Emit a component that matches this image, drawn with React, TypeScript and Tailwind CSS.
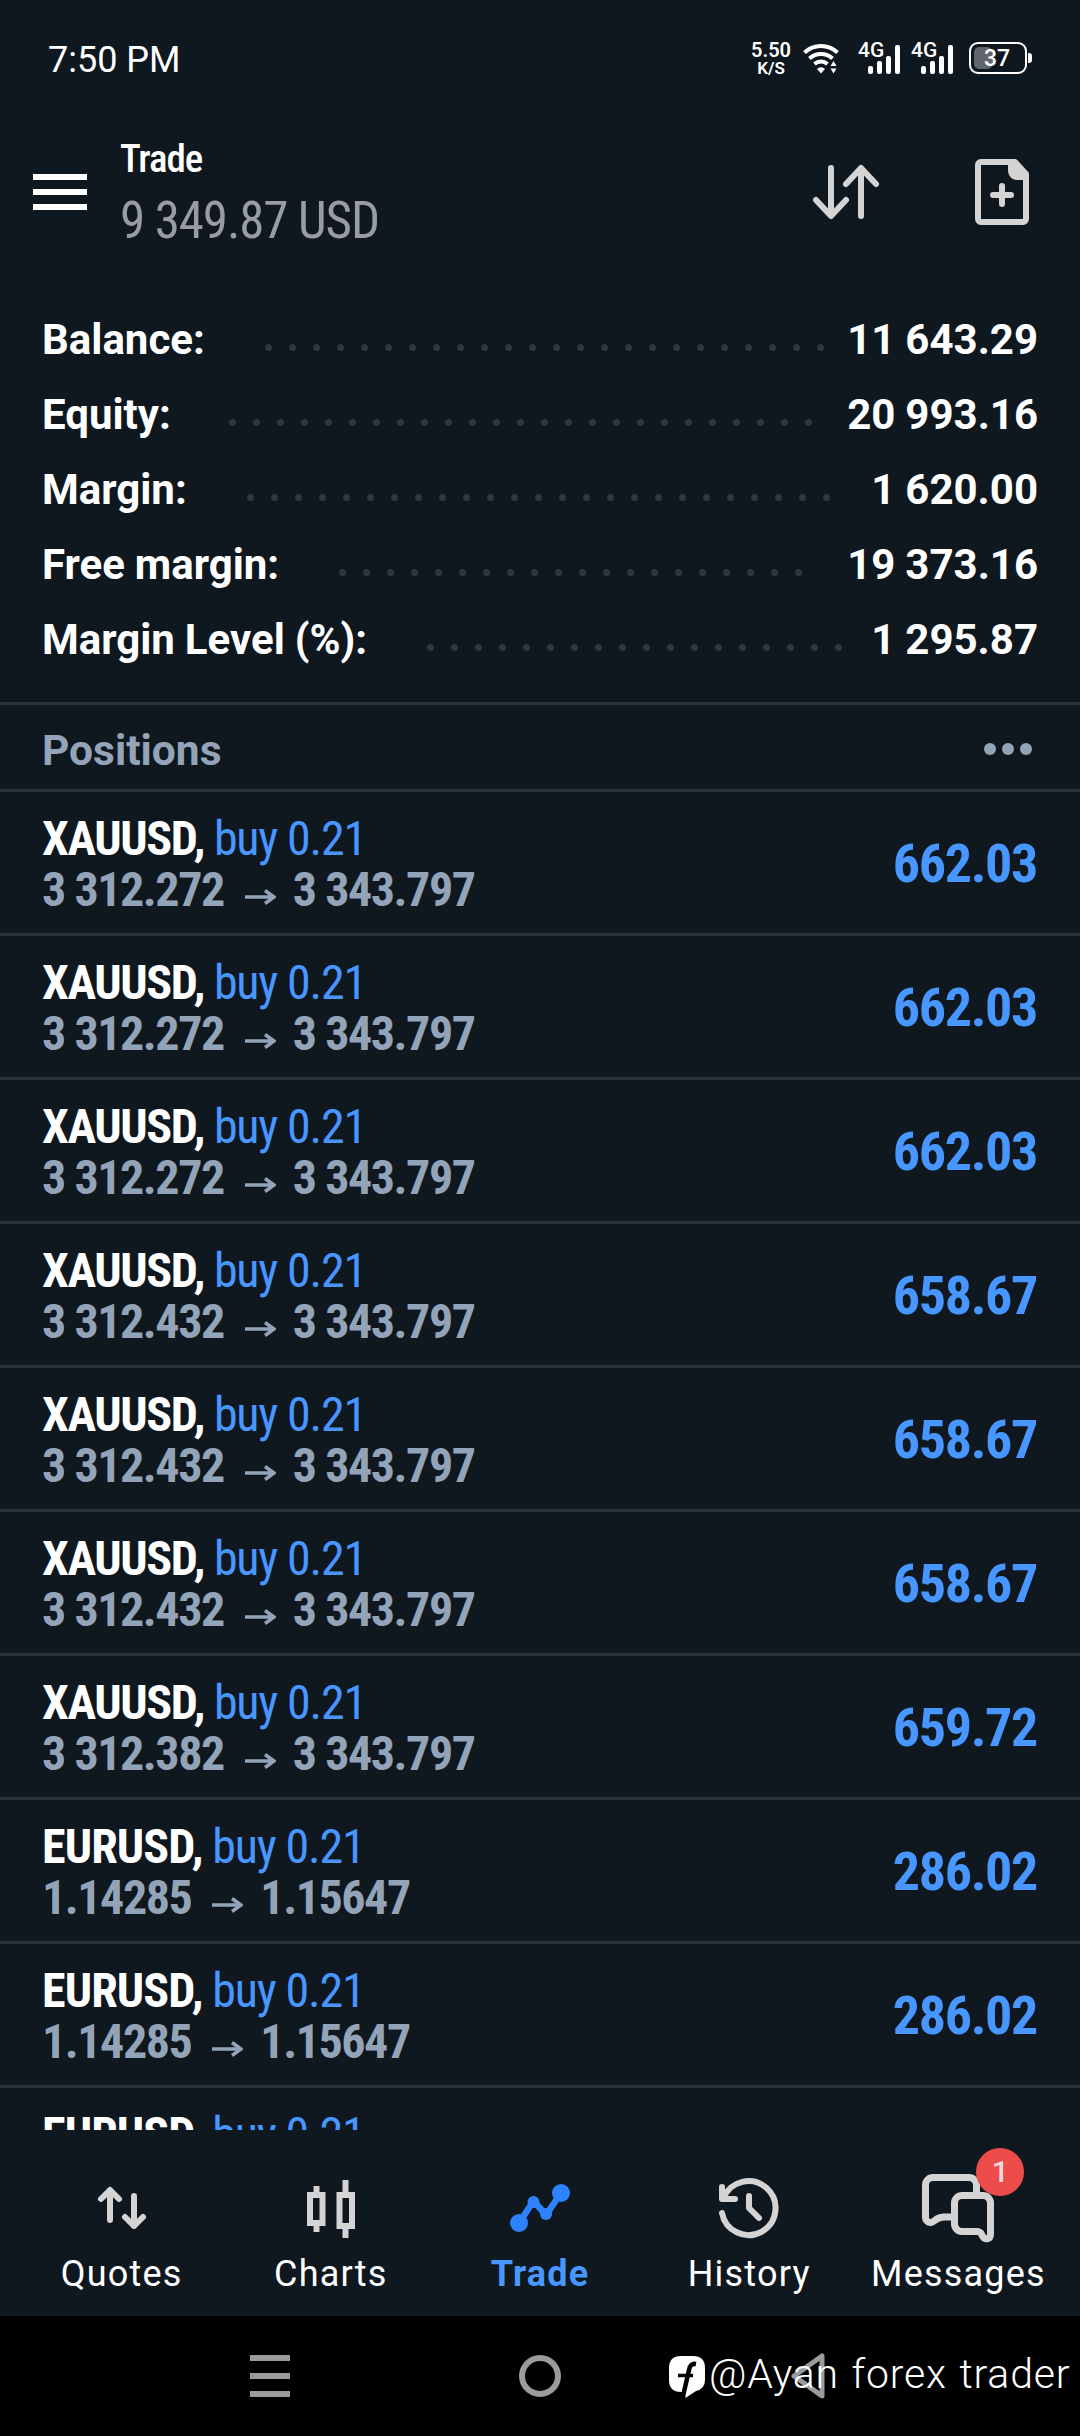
import React from 'react';

interface AccountLine {
  label: string;
  value: string;
  dots: number;
  labelWidth: string;
}

interface Position {
  symbol: string;
  symbolClass: string;
  volume: string;
  open: string;
  current: string;
  profit: string;
}

const accountLines: AccountLine[] = [
  { label: 'Balance:', value: '11 643.29', dots: 24, labelWidth: 'w-[223px]' },
  { label: 'Equity:', value: '20 993.16', dots: 25, labelWidth: 'w-[187px]' },
  { label: 'Margin:', value: '1 620.00', dots: 25, labelWidth: 'w-[205px]' },
  { label: 'Free margin:', value: '19 373.16', dots: 20, labelWidth: 'w-[297px]' },
  { label: 'Margin Level (%):', value: '1 295.87', dots: 18, labelWidth: 'w-[385px]' },
];

const gold = (open: string, profit: string): Position => ({
  symbol: 'XAUUSD',
  symbolClass: 'tracking-[-1.4px]',
  volume: 'buy 0.21',
  open,
  current: '3 343.797',
  profit,
});

const euro: Position = {
  symbol: 'EURUSD',
  symbolClass: 'tracking-[-0.9px]',
  volume: 'buy 0.21',
  open: '1.14285',
  current: '1.15647',
  profit: '286.02',
};

const positions: Position[] = [
  gold('3 312.272', '662.03'),
  gold('3 312.272', '662.03'),
  gold('3 312.272', '662.03'),
  gold('3 312.432', '658.67'),
  gold('3 312.432', '658.67'),
  gold('3 312.432', '658.67'),
  gold('3 312.382', '659.72'),
  euro,
  euro,
  euro,
];

const condensed = "font-['Roboto_Condensed','Roboto',sans-serif] [font-stretch:75%]";

const SignalIcon = () => (
  <div className="relative w-[43px] h-[32px]">
    <span className="absolute left-0 top-0 text-[21px] leading-[17px] font-medium">4G</span>
    <svg className="absolute left-[10px] top-[3px]" width="33" height="29" fill="white">
      <rect x="0" y="21" width="5" height="8" rx="2" />
      <rect x="9" y="16" width="5" height="13" rx="2" />
      <rect x="18" y="11" width="5" height="18" rx="2" />
      <rect x="27" y="0" width="5" height="29" rx="2" />
    </svg>
  </div>
);

const StatusBar = () => (
  <div className="h-24 pt-5 pl-12 pr-12 flex items-center justify-between text-white">
    <span className="text-[36px] leading-[42px] mt-1">7:50 PM</span>
    <div className="flex items-center">
      <div className="w-[40px] text-center font-semibold">
        <div className="text-[20px] leading-[20px]">5.50</div>
        <div className="text-[17px] leading-[17px]">K/S</div>
      </div>
      <svg className="ml-[11px]" width="38" height="32" viewBox="802 42 38 32" fill="none" stroke="white" strokeWidth="4">
        <path d="M804.5 52.500a24 24 0 0 1 33 0" />
        <path d="M809.5 58.500a17 17 0 0 1 23 0" />
        <path d="M814.5 64a10 10 0 0 1 13 0" />
        <path d="M817 69a5.500 5.500 0 0 1 8 0l-4 4.500z" fill="white" stroke="none" />
        <path d="M830.500 66l3-5 3 5zM830.500 68.500l3 5 3-5z" fill="white" stroke="none" />
      </svg>
      <div className="ml-[18px] flex gap-[10px]">
        <SignalIcon />
        <SignalIcon />
      </div>
      <div className="ml-[15px] flex items-center">
        <div className="relative w-[58px] h-[32px] rounded-[9px] border-2 border-white p-[3px]">
          <div className="w-[19px] h-full rounded-l-[5px] rounded-r-[6px] bg-[#5f656b]" />
          <span className="absolute left-[13px] top-[3px] text-[23px] leading-[23px] font-medium">37</span>
        </div>
        <div className="ml-[1px] w-[4px] h-[10px] rounded-r-[3px] bg-white" />
      </div>
    </div>
  </div>
);

const Header = () => (
  <div className="h-[206px] pl-[33px] pr-[51px] flex items-start">
    <div className="mt-[78px] flex flex-col gap-[9px]">
      <div className="w-[54px] h-[6px] bg-white" />
      <div className="w-[54px] h-[6px] bg-white" />
      <div className="w-[54px] h-[6px] bg-white" />
    </div>
    <div className={`ml-[33px] mt-[38px] ${condensed}`}>
      <div className="text-[39px] leading-[50px] tracking-[-1.1px] font-medium text-white">Trade</div>
      <div className="mt-[6px] text-[51px] leading-[62px] tracking-[-1.1px] text-[#9a9ba3]">9 349.87 USD</div>
    </div>
    <svg className="ml-auto mt-[63px]" width="216" height="66" viewBox="813 159 216 66" fill="none" stroke="#d4d4d4" strokeWidth="6" strokeLinecap="round" strokeLinejoin="round">
      <path d="M831 168v47M816 200l15 16 15-16" />
      <path d="M861 216v-47M846 184l15-16 15 16" />
      <path d="M981 162h34l11 12v45a3 3 0 0 1-3 3h-42a3 3 0 0 1-3-3v-54a3 3 0 0 1 3-3z" />
      <path d="M1008 162v8c0 6 4 10 9 10h9v-6l-11-12z" fill="#d4d4d4" stroke="none" />
      <path d="M1002 186v18M993 195h18" />
    </svg>
  </div>
);

const AccountRow: React.FC<{ line: AccountLine }> = ({ line }) => (
  <div className="h-[75px] flex items-center text-[42px] leading-[75px] [word-spacing:-0.5px] font-bold text-white">
    <span className={`${line.labelWidth} flex-shrink-0 whitespace-nowrap`}>{line.label}</span>
    <div className="flex gap-[17px] mt-4">
      {Array.from({ length: line.dots }, (_, i) => (
        <span key={i} className="w-[7px] h-[7px] rounded-full bg-[#2f363f]" />
      ))}
    </div>
    <span className="ml-auto">{line.value}</span>
  </div>
);

const PositionRow: React.FC<{ position: Position }> = ({ position }) => (
  <div className={`h-[144px] flex-shrink-0 pl-[42px] pr-[42px] flex justify-between border-b-[3px] border-[#2b323b] ${condensed}`}>
    <div className="pt-[21px] text-[48px] leading-[51px] whitespace-nowrap">
      <div>
        <span className={`${position.symbolClass} font-bold text-white`}>{position.symbol},</span>
        <span className="tracking-[-1.2px] text-[#4896ff]"> {position.volume}</span>
      </div>
      <div className="flex tracking-[-1.45px] font-bold text-[#94a4b8]">
        <span>{position.open}</span>
        <svg className="ml-[21px] mr-[17px] mt-[25px]" width="31" height="16" fill="none" stroke="#94a4b8" strokeWidth="3.500">
          <path d="M0 8h28M20 1.500l9 6.500-9 6.500" />
        </svg>
        <span>{position.current}</span>
      </div>
    </div>
    <div className="pt-[1px] pr-[1px] text-[54px] leading-[141px] tracking-[-1.3px] font-bold text-[#4896ff]">{position.profit}</div>
  </div>
);

const QuotesIcon = () => (
  <svg width="66" height="72" viewBox="89 2172 66 72" fill="none" stroke="#d4d4d4" strokeWidth="6" strokeLinecap="round" strokeLinejoin="round">
    <path d="M110 2220v-30M101 2199l9-9 9 9" />
    <path d="M134 2196v30M125 2217l9 9 9-9" />
  </svg>
);

const ChartsIcon = () => (
  <svg width="66" height="72" viewBox="298 2172 66 72" fill="none" stroke="#d4d4d4" strokeWidth="6">
    <path d="M310 2195h12.500v28h-12.500zM316.500 2186v6M316.500 2226v6" />
    <path d="M339.500 2195h12.500v31h-12.500zM345.500 2180v12M345.500 2229v9" />
  </svg>
);

const TradeIcon = () => (
  <svg width="66" height="72" viewBox="507 2172 66 72" fill="#2e82ff">
    <path d="M519 2223l14.500-22 12.500 14 15-22" fill="none" stroke="#2e82ff" strokeWidth="6.500" />
    <circle cx="519" cy="2223" r="9" />
    <circle cx="533.500" cy="2202" r="6" />
    <circle cx="546" cy="2214" r="6" />
    <circle cx="561" cy="2193" r="9" />
  </svg>
);

const HistoryIcon = () => (
  <svg width="66" height="72" viewBox="716 2172 66 72" fill="none" stroke="#d4d4d4" strokeWidth="6" strokeLinecap="round" strokeLinejoin="round">
    <path d="M722 2187v12h13" />
    <path d="M723.500 2198a27 27 0 1 1-1.500 15" />
    <path d="M749 2196v12l10 10" />
  </svg>
);

const MessagesIcon = () => (
  <div className="relative">
    <svg width="78" height="72" viewBox="919 2172 78 72" fill="none" stroke="#d4d4d4" strokeWidth="7" strokeLinejoin="round">
      <path d="M953 2217h-9c-8 0-9 5-13 5.500a5 5 0 0 1-5.500-5v-32.500a7.500 7.500 0 0 1 7.500-7.500h36a7.500 7.500 0 0 1 7.500 7.500v9" />
      <path d="M962 2195.500h21a7.500 7.500 0 0 1 7.500 7.500v31c0 6-6 6-8 2-2-3-1-4.500-6-4.500h-14.500a7.500 7.500 0 0 1-7.500-7.500v-21a7.500 7.500 0 0 1 7.500-7.500z" />
    </svg>
    <span className="absolute left-[57px] -top-6 w-12 h-12 rounded-full bg-[#ee4b4b] flex items-center justify-center text-[30px] leading-none font-medium text-[#ecdcdc]">1</span>
  </div>
);

const tabs = [
  { name: 'Quotes', icon: <QuotesIcon /> },
  { name: 'Charts', icon: <ChartsIcon /> },
  { name: 'Trade', icon: <TradeIcon />, active: true },
  { name: 'History', icon: <HistoryIcon /> },
  { name: 'Messages', icon: <MessagesIcon /> },
];

const TabBar = () => (
  <div className="h-[186px] px-[17px] pt-[42px] grid grid-cols-5 flex-shrink-0">
    {tabs.map((tab) => (
      <div key={tab.name} className="flex flex-col items-center">
        {tab.icon}
        <span
          className={`mt-[9px] text-[36px] leading-[42px] tracking-[1.2px] ${
            tab.active ? 'font-bold text-[#4896ff]' : 'text-white'
          }`}
        >
          {tab.name}
        </span>
      </div>
    ))}
  </div>
);

const SystemNav = () => (
  <div className="relative h-[120px] bg-black flex-shrink-0 flex items-center justify-center">
    <svg width="584" height="48" viewBox="248 2352 584 48" fill="none" stroke="#9b9b9b" strokeWidth="6" strokeLinejoin="round">
      <path d="M250 2358h40M250 2376h40M250 2394h40" />
      <circle cx="540" cy="2376" r="18" />
      <path d="M794 2376l28-20v40z" strokeWidth="5" />
    </svg>
    <div className="absolute left-[668px] top-[34px] flex items-start text-white">
      <svg className="mt-[5px]" width="38" height="44" viewBox="0 0 38 44">
        <path d="M13 1h12q12 0 12 12v12q0 9-9 11l-10.500 7v-6h-4.500q-12 0-12-12v-12q0-12 12-12z" fill="white" />
        <path d="M28 9q-6-1-7 6l-5.500 24" fill="none" stroke="black" strokeWidth="4.500" />
        <path d="M10 20.500h15" stroke="black" strokeWidth="3.500" />
      </svg>
      <span className="ml-[3px] text-[41px] leading-[48px] tracking-[0.8px] [word-spacing:2px] font-light whitespace-nowrap">@Ayan forex trader</span>
    </div>
  </div>
);

export default function App() {
  return (
    <div className="w-[1080px] h-[2436px] bg-[#0f171f] flex flex-col overflow-hidden font-['Roboto',sans-serif]">
      <StatusBar />
      <Header />
      <div className="h-[400px] pl-[42px] pr-[42px]">
        {accountLines.map((line) => (
          <AccountRow key={line.label} line={line} />
        ))}
      </div>
      <div className="h-[90px] pl-[42px] pr-[48px] flex items-center justify-between border-y-[3px] border-[#2b323b]">
        <span className="pt-[7px] text-[42.5px] leading-[77px] font-bold text-[#94a4b8]">Positions</span>
        <div className="flex gap-[6px] mt-1">
          <span className="w-3 h-3 rounded-full bg-[#94a4b8]" />
          <span className="w-3 h-3 rounded-full bg-[#94a4b8]" />
          <span className="w-3 h-3 rounded-full bg-[#94a4b8]" />
        </div>
      </div>
      <div className="h-[1338px] flex flex-col overflow-hidden">
        {positions.map((position, i) => (
          <PositionRow key={i} position={position} />
        ))}
      </div>
      <TabBar />
      <SystemNav />
    </div>
  );
}
